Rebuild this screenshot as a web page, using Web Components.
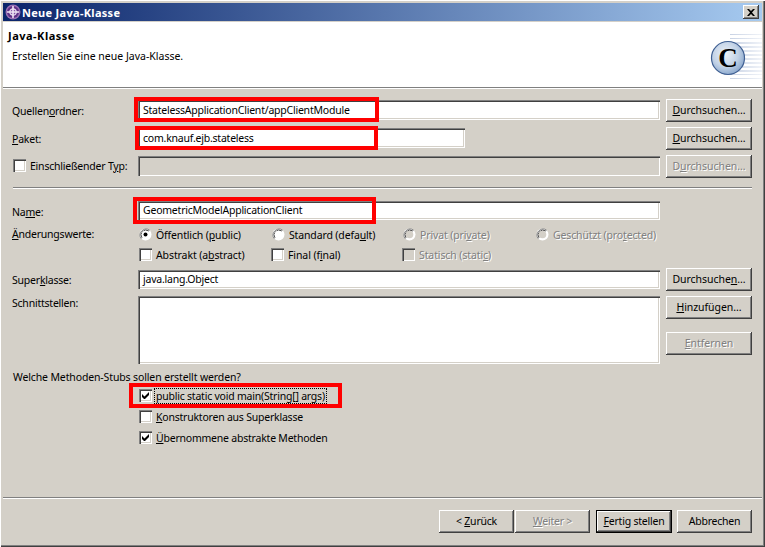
<!DOCTYPE html>
<html lang="de">
<head>
<meta charset="utf-8">
<title>Neue Java-Klasse</title>
<style>
  html, body { margin: 0; padding: 0; background: #d4d0c8; }
  body { font: 10.5px "Noto Sans", "Liberation Sans", sans-serif; letter-spacing: -.22px; color: #000; }
</style>
</head>
<body>

<wiz-dialog>
  <title-bar slot="title">Neue Java-Klasse</title-bar>
  <wiz-header slot="header">
    <span slot="heading">Java-Klasse</span>
    Erstellen Sie eine neue Java-Klasse.
  </wiz-header>

  <form-row>
    <span slot="lead">Quellen<u>o</u>rdner:</span>
    <text-field>StatelessApplicationClient/appClientModule
      <hl-box slot="mark" style="left:-4px;top:-3px;width:245px;height:25px"></hl-box>
    </text-field>
    <win-button slot="action"><u>D</u>urchsuchen...</win-button>
  </form-row>
  <form-row style="margin-top:5px">
    <span slot="lead"><u>P</u>aket:</span>
    <text-field style="width:327px">com.knauf.ejb.stateless
      <hl-box slot="mark" style="left:-3px;top:-2px;width:243px;height:24px"></hl-box>
    </text-field>
    <win-button slot="action"><u>D</u>urchsuchen...</win-button>
  </form-row>
  <form-row style="margin-top:5px">
    <win-check slot="lead">Einschließender T<u>y</u>p:</win-check>
    <text-field disabled></text-field>
    <win-button slot="action" disabled>D<u>u</u>rchsuchen...</win-button>
  </form-row>

  <win-rule style="margin:9px 0 13px 1px"></win-rule>

  <form-row slim>
    <span slot="lead">Na<u>m</u>e:</span>
    <text-field flush>GeometricModelApplicationClient
      <hl-box slot="mark" style="left:-5px;top:-4px;width:243px;height:27px"></hl-box>
    </text-field>
  </form-row>

  <option-grid style="margin-top:4px">
    <span slot="label"><u>Ä</u>nderungswerte:</span>
    <win-radio checked>Öffentlich (<u>p</u>ublic)</win-radio>
    <win-radio>Standard (defa<u>u</u>lt)</win-radio>
    <win-radio disabled>Privat (pri<u>v</u>ate)</win-radio>
    <win-radio disabled>Geschützt (pro<u>t</u>ected)</win-radio>
    <win-check style="grid-area:2/2;margin-top:-1px">Abstrakt (a<u>b</u>stract)</win-check>
    <win-check style="grid-area:2/3;margin:-1px 0 0 -1px">Final (f<u>i</u>nal)</win-check>
    <win-check style="grid-area:2/4;margin:-1px 0 0 -1px" disabled>Statisch (stati<u>c</u>)</win-check>
  </option-grid>

  <form-row style="margin-top:2px">
    <span slot="lead">Super<u>k</u>lasse:</span>
    <text-field short>java.lang.Object</text-field>
    <win-button slot="action">Durchsuche<u>n</u>...</win-button>
  </form-row>

  <form-row tall style="margin-top:5px">
    <span slot="lead">Schnittstellen:</span>
    <list-box></list-box>
    <win-button slot="action"><u>H</u>inzufügen...</win-button>
    <win-button slot="action" disabled style="margin-top:13px"><u>E</u>ntfernen</win-button>
  </form-row>

  <form-label style="margin-top:6px">Welche Methoden-Stubs sollen erstellt werden?</form-label>

  <check-list style="margin-top:1px">
    <win-check checked focused>public static void main(String<u>[</u>] args)
      <hl-box slot="mark" style="left:-10px;top:-2px;width:213px;height:25px"></hl-box>
    </win-check>
    <win-check><u>K</u>onstruktoren aus Superklasse</win-check>
    <win-check checked><u>Ü</u>bernommene abstrakte Methoden</win-check>
  </check-list>

  <wiz-footer slot="footer">
    <win-button wide>&lt; <u>Z</u>urück</win-button>
    <win-button wide disabled style="margin-left:1px"><u>W</u>eiter &gt;</win-button>
    <win-button wide default style="margin-left:6px;width:76px"><u>F</u>ertig stellen</win-button>
    <win-button wide style="margin-left:5px">Abbrechen</win-button>
  </wiz-footer>
</wiz-dialog>

<script>
(() => {
  const raised = `
    background: #d4d0c8;
    box-shadow: inset -1px -1px 0 #404040, inset 1px 1px 0 #fff, inset -2px -2px 0 #808080;
  `;
  const sunken = `
    box-shadow: inset 1px 1px 0 #808080, inset 2px 2px 0 #404040, inset -1px -1px 0 #fff, inset -2px -2px 0 #d4d0c8;
  `;
  const disabledText = `color: #808080; text-shadow: 1px 1px 0 #fff;`;

  class Base extends HTMLElement {
    connectedCallback() {
      if (this.shadowRoot) return;
      this.attachShadow({ mode: "open" });
      this.shadowRoot.innerHTML = this.render();
    }
    render() { return ""; }
  }

  class WizDialog extends Base {
    render() {
      return `<style>
        :host {
          display: flex; flex-direction: column; box-sizing: border-box;
          width: 765px; height: 547px; padding: 2px 2px 1px 2px; background: #d4d0c8;
          box-shadow: inset 1px 1px 0 #fff, inset -1px -1px 0 #404040, inset -2px -2px 0 #808080;
        }
        .frame { flex: 1; display: flex; flex-direction: column; padding: 1px; min-height: 0; }
        .body { flex: 1; display: flex; flex-direction: column; padding: 11px 10px 0 9px; }
      </style>
      <div class="frame">
        <slot name="title"></slot>
        <slot name="header"></slot>
        <div class="body"><slot></slot></div>
        <slot name="footer"></slot>
      </div>`;
    }
  }

  class TitleBar extends Base {
    render() {
      return `<style>
        :host {
          display: flex; align-items: center; gap: 1px; height: 18px; padding: 0 3px 0 2px; margin-bottom: 1px;
          background: linear-gradient(90deg, #0a246a, #a6caf0);
          color: #fff; font: bold 11px "Noto Sans", "Liberation Sans", sans-serif;
        }
        .text { flex: 1; letter-spacing: .3px; }
        .close {
          width: 16px; height: 14px; box-sizing: border-box; display: flex; align-items: center; justify-content: center;
          ${raised}
        }
      </style>
      <svg width="16" height="16" viewBox="0 0 16 16">
        <circle cx="8" cy="8" r="7.500" fill="#9a70b4"/>
        <circle cx="8" cy="8" r="6" fill="#5f2f86"/>
        <circle cx="8" cy="8" r="3.200" fill="#7f4fa2" stroke="#e8dcf0" stroke-width="1.200"/>
        <path d="M8 2v12M2 8h12" stroke="#f0e4f4" stroke-width="1.600"/>
      </svg>
      <span class="text"><slot></slot></span>
      <span class="close"><svg width="8" height="7" viewBox="0 0 8 7"><path d="M0 0h2l2 2 2-2h2L5 3.500 8 7H6L4 5 2 7H0l3-3.500z" fill="#000"/></svg></span>`;
    }
  }

  class WizHeader extends Base {
    render() {
      return `<style>
        :host {
          display: flex; box-sizing: border-box; height: 66px; background: #fff;
          border-bottom: 1px solid #808080; box-shadow: 0 1px 0 #fff;
        }
        .text { flex: 1; padding: 7px 0 0 5px; }
        .heading { font: bold 11px "Noto Sans", "Liberation Sans", sans-serif; letter-spacing: .5px; line-height: 14px; }
        p { margin: 6px 0 0 4px; line-height: 14px; letter-spacing: 0; }
        svg { display: block; flex: none; margin-top: 8px; }
      </style>
      <div class="text"><div class="heading"><slot name="heading"></slot></div><p><slot></slot></p></div>
      <svg width="56" height="57" viewBox="0 0 56 57">
        <defs>
          <radialGradient id="ball" cx=".42" cy=".38" r=".7">
            <stop offset="0" stop-color="#eef2f8"/><stop offset=".55" stop-color="#c2d2e6"/><stop offset="1" stop-color="#7f9fc8"/>
          </radialGradient>
          <linearGradient id="fade" x1="0" x2="1" y1="0" y2="0">
            <stop offset="0" stop-color="#c8d2e4"/><stop offset="1" stop-color="#f1f4f9"/>
          </linearGradient>
        </defs>
        <g fill="url(#fade)">
          <rect x="24" y="4" width="32" height="1"/><rect x="24" y="8" width="32" height="1"/>
          <rect x="24" y="12" width="32" height="2"/><rect x="24" y="16" width="32" height="2"/>
          <rect x="24" y="20" width="32" height="2"/><rect x="24" y="24" width="32" height="2"/>
          <rect x="24" y="28" width="32" height="2"/><rect x="24" y="32" width="32" height="2"/>
          <rect x="24" y="36" width="32" height="2"/><rect x="24" y="40" width="32" height="2"/>
          <rect x="24" y="44" width="32" height="1"/><rect x="24" y="48" width="32" height="1"/>
        </g>
        <circle cx="22" cy="28" r="16.500" fill="url(#ball)" stroke="#3f5f92" stroke-width="1.200"/>
        <text x="22" y="37" text-anchor="middle" font-family="Liberation Serif, serif" font-weight="bold" font-size="27" letter-spacing="0" fill="#000">C</text>
      </svg>`;
    }
  }

  class FormLabel extends Base {
    render() {
      return `<style>:host { display: block; line-height: 14px; white-space: nowrap; padding-left: 1px; letter-spacing: -.13px; }</style><slot></slot>`;
    }
  }

  class FormRow extends Base {
    render() {
      const tall = this.hasAttribute("tall");
      const slim = this.hasAttribute("slim");
      return `<style>
        :host { display: flex; min-height: ${slim ? 19 : 23}px; white-space: nowrap; }
        .lead { width: 126px; flex: none; box-sizing: border-box; padding: ${tall ? 0 : slim ? 4 : 5}px 0 0 0; line-height: 14px; }
        .lead ::slotted(win-check) { margin: -5px 0 0 1px; }
        .field { width: 522px; flex: none; }
        .actions { width: 86px; margin-left: 6px; display: flex; flex-direction: column; flex: none; }
      </style>
      <div class="lead"><slot name="lead"></slot></div>
      <div class="field"><slot></slot></div>
      <div class="actions"><slot name="action"></slot></div>`;
    }
  }

  class TextField extends Base {
    render() {
      const flush = this.hasAttribute("flush");
      const short = this.hasAttribute("short");
      const disabled = this.hasAttribute("disabled");
      const h = flush || short ? 19 : 20;
      return `<style>
        :host {
          display: block; position: relative; box-sizing: border-box;
          height: ${h}px; margin-top: ${flush ? 0 : short ? 2 : 1}px;
          padding: 0 0 0 5px; line-height: ${short ? h - 1 : h}px;
          background: ${disabled ? "#d4d0c8" : "#fff"}; ${sunken}
        }
      </style><slot></slot><slot name="mark"></slot>`;
    }
  }

  class ListBox extends Base {
    render() {
      return `<style>:host { display: block; height: 68px; background: #fff; ${sunken} }</style>`;
    }
  }

  class WinButton extends Base {
    render() {
      const disabled = this.hasAttribute("disabled");
      const isDefault = this.hasAttribute("default");
      const wide = this.hasAttribute("wide");
      return `<style>
        :host {
          display: flex; align-items: center; justify-content: center; box-sizing: border-box;
          width: ${wide ? "75px" : "100%"}; height: 23px; padding-bottom: 2px; white-space: nowrap;
          ${wide ? "" : "letter-spacing: -.05px;"}
          ${raised}
          ${disabled ? disabledText : ""}
          ${isDefault ? "outline: 1px solid #000; outline-offset: -1px; box-shadow: inset -2px -2px 0 #404040, inset 2px 2px 0 #fff, inset -3px -3px 0 #808080;" : ""}
        }
      </style><span><slot></slot></span>`;
    }
  }

  class WinCheck extends Base {
    render() {
      const disabled = this.hasAttribute("disabled");
      const checked = this.hasAttribute("checked");
      const focused = this.hasAttribute("focused");
      return `<style>
        :host { display: flex; align-items: center; gap: ${focused ? 3 : 4}px; height: 21px; white-space: nowrap; position: relative; }
        :host-context(option-grid) { letter-spacing: -.1px; }
        .box {
          flex: none; box-sizing: border-box; width: 13px; height: 13px; position: relative;
          background: ${disabled ? "#d4d0c8" : "#fff"}; ${sunken}
        }
        svg { position: absolute; left: 3px; top: 3px; }
        .text { line-height: 14px; ${disabled ? disabledText : ""} ${focused ? "outline: 1px dotted #000; padding: 0 1px;" : ""} }
      </style>
      <span class="box">${checked ? `<svg width="7" height="7" viewBox="0 0 7 7"><path d="M0 2v3l2 2h1l4-4V0L2.500 4.500z" fill="#000"/></svg>` : ""}</span>
      <span class="text"><slot></slot></span><slot name="mark"></slot>`;
    }
  }

  class WinRadio extends Base {
    render() {
      const disabled = this.hasAttribute("disabled");
      const checked = this.hasAttribute("checked");
      return `<style>
        :host { display: flex; align-items: center; gap: 4px; height: 21px; white-space: nowrap; letter-spacing: -.14px; }
        svg { flex: none; }
        .text { line-height: 14px; ${disabled ? disabledText : ""} }
      </style>
      <svg width="13" height="13" viewBox="0 0 13 13">
        <circle cx="6.500" cy="6.500" r="6" fill="#fff"/>
        <path d="M2.300 10.700A6 6 0 0 1 10.700 2.300" fill="none" stroke="#808080" stroke-width="1"/>
        <path d="M3 9.800A4.900 4.900 0 0 1 9.800 3" fill="none" stroke="#404040" stroke-width="1"/>
        <circle cx="6.500" cy="6.500" r="3.800" fill="${disabled ? "#d4d0c8" : "#fff"}"/>
        ${checked ? `<circle cx="6.500" cy="6.500" r="2" fill="#000"/>` : ""}
      </svg>
      <span class="text"><slot></slot></span>`;
    }
  }

  class OptionGrid extends Base {
    render() {
      return `<style>
        :host { display: grid; grid-template-columns: 127px 133px 131px 133px auto; grid-auto-rows: 21px; }
        .label { grid-area: 1 / 1; padding: 3px 0 0 0; line-height: 14px; }
      </style>
      <div class="label"><slot name="label"></slot></div>
      <slot></slot>`;
    }
  }

  class CheckList extends Base {
    render() {
      return `<style>:host { display: flex; flex-direction: column; padding-left: 127px; }</style><slot></slot>`;
    }
  }

  class HlBox extends Base {
    render() {
      return `<style>:host { position: absolute; display: block; box-sizing: border-box; border: 4px solid #ff0000; pointer-events: none; z-index: 2; }</style>`;
    }
  }

  class WinRule extends Base {
    render() {
      return `<style>:host { display: block; height: 1px; background: #808080; box-shadow: 0 1px 0 #fff; }</style>`;
    }
  }

  class WizFooter extends Base {
    render() {
      return `<style>
        :host {
          display: flex; justify-content: flex-end; box-sizing: border-box; height: 48px;
          padding: 12px 10px 0 0; border-top: 1px solid #808080; box-shadow: inset 0 1px 0 #fff;
        }
      </style><slot></slot>`;
    }
  }

  customElements.define("wiz-dialog", WizDialog);
  customElements.define("title-bar", TitleBar);
  customElements.define("wiz-header", WizHeader);
  customElements.define("form-label", FormLabel);
  customElements.define("form-row", FormRow);
  customElements.define("text-field", TextField);
  customElements.define("list-box", ListBox);
  customElements.define("win-button", WinButton);
  customElements.define("win-check", WinCheck);
  customElements.define("win-radio", WinRadio);
  customElements.define("option-grid", OptionGrid);
  customElements.define("check-list", CheckList);
  customElements.define("hl-box", HlBox);
  customElements.define("win-rule", WinRule);
  customElements.define("wiz-footer", WizFooter);
})();
</script>
</body>
</html>
